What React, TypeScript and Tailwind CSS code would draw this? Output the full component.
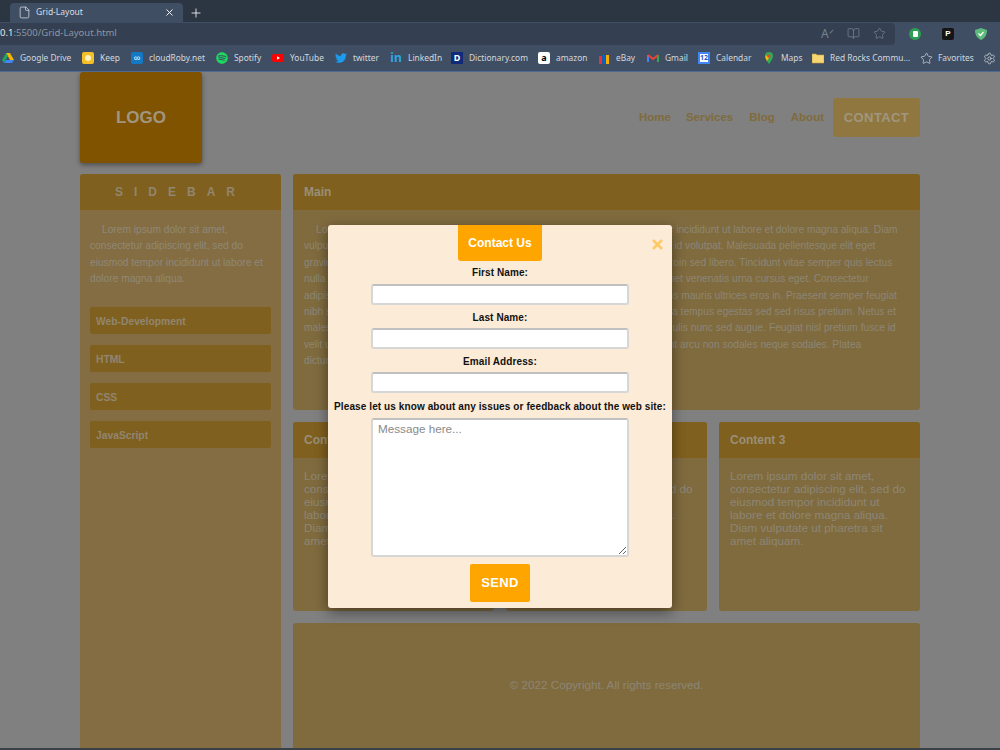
import { type ReactNode } from "react";
import { BookOpen, File, Plus, Settings, Star, X } from "lucide-react";
import { FaSpotify, FaTwitter } from "react-icons/fa";

const mainLines = [
  "Lorem ipsum dolor sit amet, consectetur adipiscing elit, sed do eiusmod tempor incididunt ut labore et dolore magna aliqua. Diam",
  "vulputate ut pharetra sit amet aliquam id diam maecenas ultricies mauris pharetra id volutpat. Malesuada pellentesque elit eget",
  "gravida cum sociis natoque penatibus et magnis dis parturient montes nascetur proin sed libero. Tincidunt vitae semper quis lectus",
  "nulla at volutpat diam ut venenatis tellus in metus lectus magna vulputate in sit amet venenatis urna cursus eget. Consectetur",
  "adipiscing elit pellentesque habitant et netus et malesuada morbi tristique senectus mauris ultrices eros in. Praesent semper feugiat",
  "nibh sed pulvinar proin gravida ut morbi tincidunt augue interdum hendrerit lectus a tempus egestas sed sed risus pretium. Netus et",
  "malesuada fames ac turpis egestas integer eget aliquet nibh praesent tristique iaculis nunc sed augue. Feugiat nisl pretium fusce id",
  "velit ut tortor pretium viverra suspendisse potenti nullam ac tortor vitae elit tincidunt arcu non sodales neque sodales. Platea",
  "dictumst vestibulum rhoncus est pellentesque.",
];

const contentText =
  "Lorem ipsum dolor sit amet, consectetur adipiscing elit, sed do eiusmod tempor incididunt ut labore et dolore magna aliqua. Diam vulputate ut pharetra sit amet aliquam.";

const iconBox = "w-3 h-3 shrink-0 flex items-center justify-center";

const bookmarks: { name: string; width: string; icon: ReactNode }[] = [
  {
    name: "Google Drive",
    width: "w-[80px]",
    icon: (
      <svg viewBox="0 0 12 12" className={iconBox}>
        <path d="M4 1h4l4 7H8z" fill="#f5b400" />
        <path d="M4 1 0 8l2 3 4-7z" fill="#1fa463" />
        <path d="M2 11h8l2-3H4z" fill="#4285f4" />
      </svg>
    ),
  },
  {
    name: "Keep",
    width: "w-[49px]",
    icon: (
      <span className={`${iconBox} bg-[#f6bf26] rounded-[2px]`}>
        <span className="w-[6px] h-[6px] rounded-full bg-[#fff3c4]" />
      </span>
    ),
  },
  {
    name: "cloudRoby.net",
    width: "w-[85px]",
    icon: (
      <span className={`${iconBox} bg-[#1479c4] text-white text-[9px] leading-none rounded-[2px]`}>∞</span>
    ),
  },
  {
    name: "Spotify",
    width: "w-[56px]",
    icon: <FaSpotify className="w-3 h-3 shrink-0 text-[#1ed760]" />,
  },
  {
    name: "YouTube",
    width: "w-[63px]",
    icon: (
      <svg viewBox="0 0 12 12" className={iconBox}>
        <rect x="0" y="2" width="12" height="8" rx="2" fill="#f00" />
        <path d="M5 4.200 8 6 5 7.800z" fill="#fff" />
      </svg>
    ),
  },
  {
    name: "twitter",
    width: "w-[55px]",
    icon: <FaTwitter className="w-3 h-3 shrink-0 text-[#1d9bf0]" />,
  },
  {
    name: "LinkedIn",
    width: "w-[61px]",
    icon: (
      <span className={`${iconBox} text-[#2ea7e0] font-bold text-[12px] leading-none`}>in</span>
    ),
  },
  {
    name: "Dictionary.com",
    width: "w-[87px]",
    icon: (
      <span className={`${iconBox} bg-[#0f2a78] text-white font-bold text-[9px] leading-none`}>D</span>
    ),
  },
  {
    name: "amazon",
    width: "w-[60px]",
    icon: (
      <span className={`${iconBox} bg-white text-black font-bold text-[9px] leading-none rounded-[2px]`}>a</span>
    ),
  },
  {
    name: "eBay",
    width: "w-[49px]",
    icon: (
      <svg viewBox="0 0 12 12" className={iconBox}>
        <rect x="1" y="4" width="3" height="8" fill="#e53238" />
        <rect x="4.500" y="3" width="3" height="9" fill="#0064d2" />
        <rect x="8" y="3" width="3" height="9" fill="#f5af02" />
      </svg>
    ),
  },
  {
    name: "Gmail",
    width: "w-[51px]",
    icon: (
      <svg viewBox="0 0 12 12" className={iconBox}>
        <path d="M1 3v7" stroke="#4285f4" strokeWidth="2" />
        <path d="M11 3v7" stroke="#34a853" strokeWidth="2" />
        <path d="M1 3l5 4 5-4" stroke="#ea4335" strokeWidth="2" fill="none" />
      </svg>
    ),
  },
  {
    name: "Calendar",
    width: "w-[65px]",
    icon: (
      <span className={`${iconBox} bg-white border-2 border-[#4285f4] text-[#1a5ac8] text-[7px] font-bold leading-none`}>12</span>
    ),
  },
  {
    name: "Maps",
    width: "w-[49px]",
    icon: (
      <svg viewBox="0 0 12 12" className="w-[12px] h-3 shrink-0">
        <path d="M6 0a4 4 0 0 1 4 4c0 3-4 8-4 8S2 7 2 4a4 4 0 0 1 4-4z" fill="#34a853" />
        <path d="M2.500 3 6 6 4 9 2.500 6z" fill="#fbbc04" />
        <circle cx="6" cy="4" r="1.600" fill="#ea4335" />
      </svg>
    ),
  },
  {
    name: "Red Rocks Commu...",
    width: "w-[108px]",
    icon: (
      <svg viewBox="0 0 12 12" className={iconBox}>
        <path d="M0 2h4l1 1h7v8H0z" fill="#f7d774" stroke="#c9a23c" strokeWidth=".6" />
      </svg>
    ),
  },
];

const sideLinks = ["Web-Development", "HTML", "CSS", "JavaScript"];

function ContentCard({ title }: { title: string }) {
  return (
    <section className="flex-1 rounded-[3px] bg-[#806b3f] overflow-hidden h-[189px]">
      <h2 className="h-9 bg-[#80601f] px-[11px] flex items-center text-xs font-bold text-[#998f78]">
        {title}
      </h2>
      <p className="px-[11px] pt-[11px] text-[11.7px] leading-[13px] text-[#8d8675]">{contentText}</p>
    </section>
  );
}

function Field({ label, id, labelClass }: { label: string; id: string; labelClass: string }) {
  return (
    <>
      <label htmlFor={id} className={`${labelClass} text-[10px] leading-[14px] font-bold tracking-[0.1px] text-[#111]`}>
        {label}
      </label>
      <input
        id={id}
        className="w-[258px] h-[21px] shrink-0 bg-white rounded-[3px] border-2 border-[#d6d6d6] border-t-[#c0c0c0]"
      />
    </>
  );
}

export default function App() {
  return (
    <div className="w-[1000px] h-[750px] overflow-hidden flex flex-col font-['Liberation_Sans',Arial,sans-serif] bg-[#808080]">
      {/* barra del navegador */}
      <div className="h-[22px] shrink-0 bg-[#2c3542] flex items-end">
        <div className="ml-[10px] w-[173px] h-[19px] bg-[#3f4e63] rounded-t-[4px] flex items-center pl-[8px] pr-[8px] text-[#d9dde2]">
          <File size={13} strokeWidth={1.4} />
          <span className="ml-[5px] text-[8.5px] font-['Noto_Sans',sans-serif]">Grid-Layout</span>
          <X size={11} className="ml-auto text-white" />
        </div>
        <Plus size={14} strokeWidth={1.4} className="ml-[6px] mb-[2px] text-white" />
      </div>

      <div className="h-[23px] shrink-0 bg-[#3f4e63] flex items-center">
        <div className="w-[895px] h-[22px] bg-[#344051] rounded-r-[4px] flex items-center whitespace-nowrap overflow-hidden text-[9.5px] font-['Noto_Sans',sans-serif] text-[#8d96a1]">
          <span className="text-[#e8eaec]">0.1</span>
          <span>:5500/Grid-Layout.html</span>
          <span className="ml-auto flex items-center gap-[13px] pr-[9px] text-[#78828e]">
            <span className="w-[13px] text-[12px] leading-none">Aᐟ</span>
            <BookOpen size={13} strokeWidth={1.4} />
            <Star size={13} strokeWidth={1.4} />
          </span>
        </div>
        <div className="flex-1 flex items-center justify-between pl-[14px] pr-[13px]">
          <span className="w-3 h-3 rounded-full bg-[#2f9e54] flex items-center justify-center">
            <span className="w-[5px] h-[6px] bg-white rounded-[1px]" />
          </span>
          <span className="w-3 h-3 bg-[#151515] rounded-[2px] text-white text-[8px] font-bold leading-3 text-center">P</span>
          <svg viewBox="0 0 12 12" className="w-3 h-3">
            <path d="M0 2 6 0l6 2c0 5-2 8-6 10C2 10 0 7 0 2z" fill="#5dbb7b" />
            <path d="M3.500 5.500 5.500 7.500 8.500 4" stroke="#fff" strokeWidth="1.200" fill="none" />
          </svg>
        </div>
      </div>

      <div className="h-[27px] shrink-0 bg-[#3f4e63] border-b border-[#4d6a94] flex items-center pl-[2px] text-[8.4px] font-['Noto_Sans',sans-serif] text-[#d3d8de] whitespace-nowrap">
        {bookmarks.map((b) => (
          <div key={b.name} className={`${b.width} shrink-0 flex items-center gap-[6px]`}>
            {b.icon}
            <span>{b.name}</span>
          </div>
        ))}
        <div className="flex items-center gap-[5px]">
          <Star size={13} strokeWidth={1.3} />
          <span>Favorites</span>
        </div>
        <Settings size={13} strokeWidth={1.4} className="ml-auto mr-[4px]" />
      </div>

      {/* pagina con el modal abierto */}
      <div className="relative flex-1 overflow-hidden">
        <div className="w-[840px] mx-auto">
          <header className="h-[102px] flex items-start">
            <div className="w-[122px] h-[91px] rounded-[3px] bg-[#805300] shadow-[0_2px_5px_rgba(0,0,0,0.4)] flex items-center justify-center text-[17px] font-bold text-[#a0967f]">
              LOGO
            </div>
            <nav className="ml-auto mt-[26px] flex items-center text-[11.5px] font-bold text-[#7f6b3c]">
              <a className="mr-[15px]">Home</a>
              <a className="mr-[16px]">Services</a>
              <a className="mr-[16px]">Blog</a>
              <a className="mr-[9px]">About</a>
              <a className="w-[87px] h-[39px] rounded-[3px] bg-[#907740] flex items-center justify-center text-[13px] tracking-[0.4px] text-[#a0967f]">
                CONTACT
              </a>
            </nav>
          </header>

          <div className="grid grid-cols-[201px_627px] gap-3">
            <aside className="rounded-[3px] bg-[#846d43] overflow-hidden h-[600px]">
              <h2 className="h-9 bg-[#80601f] flex items-center justify-center text-xs font-bold tracking-[11px] text-[#918670]">
                SIDEBAR
              </h2>
              <p className="px-[10px] pt-[12px] text-[10.2px] leading-[16.4px] indent-3 text-[#8f8877]">
                Lorem ipsum dolor sit amet, consectetur adipiscing elit, sed do eiusmod tempor incididunt ut labore et dolore magna aliqua.
              </p>
              <ul className="mt-[19px] px-[10px] flex flex-col gap-[11px]">
                {sideLinks.map((link) => (
                  <li
                    key={link}
                    className="h-[27px] rounded-[2px] bg-[#80601f] px-[6px] pt-[3px] flex items-center text-[10.3px] font-bold text-[#918670]"
                  >
                    {link}
                  </li>
                ))}
              </ul>
            </aside>

            <div className="flex flex-col gap-3">
              <main className="rounded-[3px] bg-[#806b3f] overflow-hidden h-[236px]">
                <h2 className="h-9 bg-[#80601f] px-[11px] flex items-center text-xs font-bold text-[#998f78]">
                  Main
                </h2>
                <div className="px-[11px] pt-[12px] text-[10.2px] leading-[16.4px] whitespace-nowrap text-[#8d8675]">
                  {mainLines.map((line, i) => (
                    <p key={line} className={i === 0 ? "indent-3" : ""}>
                      {line}
                    </p>
                  ))}
                </div>
              </main>
              <div className="flex gap-3">
                <ContentCard title="Content 1" />
                <ContentCard title="Content 2" />
                <ContentCard title="Content 3" />
              </div>
              <footer className="h-[130px] pb-[6px] rounded-[3px] bg-[#806b3f] flex items-center justify-center text-[11.7px] text-[#8d8675]">
                © 2022 Copyright. All rights reserved.
              </footer>
            </div>
          </div>
        </div>

        {/* modal */}
        <form className="absolute left-[328px] top-[153px] w-[344px] h-[383px] rounded-[3px] bg-[#fbebd7] shadow-[0_4px_14px_rgba(0,0,0,0.45)] flex flex-col items-center">
          <div className="w-[84px] h-9 shrink-0 rounded-b-[3px] bg-[#ffa500] flex items-center justify-center text-xs font-bold text-white">
            Contact Us
          </div>
          <X size={15} strokeWidth={4} className="absolute right-[7px] top-[12px] text-[#ffc966]" />
          <Field label="First Name:" id="first" labelClass="mt-[5px] mb-1" />
          <Field label="Last Name:" id="last" labelClass="mt-[6px] mb-[3px]" />
          <Field label="Email Address:" id="email" labelClass="mt-[6px] mb-[3px]" />
          <label htmlFor="msg" className="mt-[7px] mb-[4px] text-[10px] leading-[14px] font-bold tracking-[0.1px] text-[#111] whitespace-nowrap">
            Please let us know about any issues or feedback about the web site:
          </label>
          <textarea
            id="msg"
            placeholder="Message here..."
            className="w-[258px] h-[139px] shrink-0 bg-white rounded-[3px] border-2 border-[#d6d6d6] border-t-[#c0c0c0] px-[5px] py-0 text-[11.7px] placeholder:text-[#8a8a8a]"
          />
          <button type="button" className="mt-[7px] w-[60px] h-[38px] rounded-[2px] bg-[#ffa500] text-[13px] font-bold tracking-[0.4px] text-white">
            SEND
          </button>
        </form>
      </div>

      <div className="h-[2px] shrink-0 bg-[#3b4148]" />
    </div>
  );
}
